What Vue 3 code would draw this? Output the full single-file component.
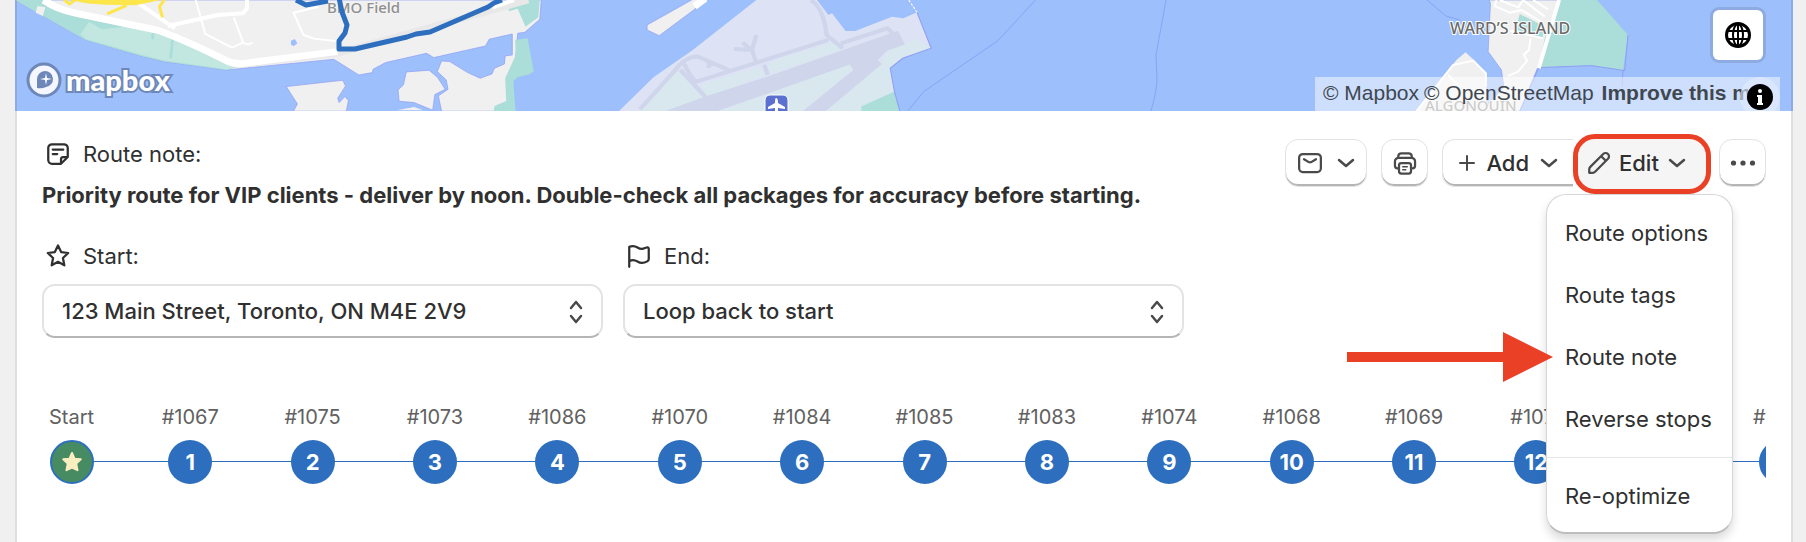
<template>
	<div class="page">
		<main class="card">
			<section class="map" aria-label="Route map">
				<svg class="map-canvas" viewBox="15 0 1778 111" preserveAspectRatio="xMinYMin slice" aria-hidden="true">
					<!-- mainland shore -->
					<g transform="scale(0.357 0.333)">
						<path class="land" d="M42 0 100 35 240 120 400 170 460 185 635 210 935 178 1005 225 1043 218 1045 208 1080 188 1195 160 1215 173 1360 138 1370 118 1435 102 1435 165 1415 168 1413 192 1385 205 1378 222 1345 235 1310 218 1260 185 1237 183 1225 215 1250 240 1255 268 1228 288 1237 334H1420L1445 165 1450 100 1470 97 1512 58 1516 0Z" />
						<path class="land" d="M802 260 960 241 968 258 946 295 950 308 966 290 976 302 970 334H822L833 312Z" />
						<path class="land" d="M1138 216 1202 211 1226 233 1247 268 1218 284 1212 331 1160 308 1118 304 1115 270 1130 255Z" />
						<path class="land flat" d="M1112 331 1160 321 1185 331Z" />
						<path class="park" d="M42 0 130 0 190 30 480 95 670 200 635 210 460 185 400 170 240 120 100 35Z" />
						<path class="park-light" d="M250 65 285 88 350 80 425 97 480 115 560 150 660 202 635 208 460 182 400 165 240 117 225 103Z" />
						<path class="park-line" d="M428 97V118M483 118 478 175" />
						<path class="park" d="M1422 16 1452 0H1512L1508 52 1472 80 1450 26 1426 34Z" />
						<path class="park" d="M1443 120 1478 115 1495 215 1483 223 1450 232 1438 243 1444 334H1383L1385 318 1418 303 1415 235 1445 165Z" />
						<path class="land flat" d="M105 18 127 22 120 48 100 38Z" />
						<path class="water" d="M815 122 826 117 833 130 822 139 815 134Z" />
						<path class="road-edge" d="M122 0Q160 28 215 40L440 90Q520 120 640 185 665 195 700 190L945 160 1480 0" />
						<path class="road" d="M122 0Q160 28 215 40L440 90Q520 120 640 185 665 195 700 188L945 155" />
						<path class="road mid" d="M375 0 490 85M470 78 610 45 680 40 692 25V0M1380 22 1440 0" />
						<path class="road thin" d="M548 0 575 102 650 143 680 128 695 134 708 128M655 52 682 130M892 20 822 38 850 105 880 116 945 124" />
						<path class="highway-fill" d="M205 0Q230 12 300 14L380 16 450 0Z" />
						<path class="highway" d="M180 0 195 12 210 0M300 42 355 16M460 0 447 20 455 52" />
					</g>
					<!-- island airport -->
					<g transform="translate(500 0) scale(0.357 0.333)">
						<path class="land" d="M540 -2 412 75V90L446 107 580 0Z" />
						<path class="road" d="M575 -5 545 19" />
						<path class="airport" d="M718 0 540 150 430 232 333 334H1120L1105 275 1093 205 1128 175 1208 145 1168 37 1130 55 1098 50 995 93H968L930 40 920 45 888 0Z" />
						<path class="airfield" d="M495 215 390 334H475L570 295 510 222ZM565 260 575 250 730 202 742 225 590 286 570 285ZM750 195 765 182 935 128 952 152 760 220ZM985 192 610 334H850L985 215ZM1060 200 910 334H1010L1105 275 1093 205 1128 175 1208 145 1165 120 1090 150Z" />
						<path class="runway-fill" d="M462 334 575 290 750 230 1115 92 1134 134 1085 152 1058 180 1070 192 912 334H848L990 210 980 194 608 334Z" />
						<path class="taxiway" d="M392 328 490 212Q520 168 555 170L640 210M505 210 575 290M515 190Q535 235 550 245L920 120M870 0Q905 20 915 105L960 145M740 195 750 225M955 130 1085 85 1105 105" />
						<path class="taxiway" d="M718 105 706 150 718 190M655 147 710 150M680 127 702 150M585 204V192H600" />
						<path class="park" d="M1012 320 1105 275 1120 334H1012Z" />
						<path class="shore" d="M1168 37 1208 145 1128 175 1093 205 1105 275 1120 334" />
						<path class="dashes" d="M1145 0 1168 37" />
						<path class="ferry" d="M1500 0 1395 122 1187 275 1142 334" />
					</g>
					<path class="ferry" d="M1166 0 1156 55 1157 80Q1157 90 1151 111M1427 0 1446 16 1460 20" />
					<!-- ward's island -->
					<g transform="translate(1300 0) scale(0.333)">
						<path class="land" d="M568 0 572 10 565 155 605 210 612 260 550 334H660L715 200 778 0Z" />
						<path class="land flat" d="M497 157 470 180 430 230 350 334H560V220L520 178Z" />
						<path class="park" d="M778 0H892L985 105 970 212 875 197 717 203 735 115Z" />
						<path class="park" d="M660 42 735 80 728 115 645 95Z" />
						<path class="shore" d="M985 105 975 212 875 197 717 203 660 334M970 212 967 260" />
						<path class="road mid" d="M778 0 717 205" />
						<path class="road thin" d="M590 0 585 18 630 38 665 30 728 68M600 0 655 22 670 0 735 50M700 0 745 28M630 92 730 115M692 115 688 150 672 165 682 182 655 215 625 228M350 334 460 195 520 182 558 220V260M445 225 480 262" />
					</g>
					<rect class="airport-icon" x="765" y="95" width="23" height="22" rx="5" />
					<path class="plane" d="M776 98Q778 98 778 103L785 107V109L778 108V114H775V108L768 109V107L775 103Q775 98 776 98Z" />
					<text class="place" x="327" y="13">BMO Field</text>
					<text class="place island" x="1450" y="34">WARD’S ISLAND</text>
					<text class="place faint" x="1425" y="111">ALGONQUIN</text>
					<path class="route" d="M296 0 306 5 328 1M339 -2 342 12 347 25 345 33 339 41V49H355L407 37 416 34 430 32 488 7 494 3 502 0" />
				</svg>

				<a class="map-logo" href="#" aria-label="Mapbox homepage">
					<svg width="36" height="38" viewBox="0 0 36 38" aria-hidden="true">
						<circle cx="18" cy="19" r="16" fill="#f4f7ff" stroke="#6d87b9" stroke-width="3" />
						<path d="M11 27V18A8 8 0 1 1 20 26Q16 28 11 27Z" fill="#6d87b9" />
						<path d="M20 12 21 17 26 18 21 19 20 24 19 19 14 18 19 17Z" fill="#fff" />
					</svg>
					<span>mapbox</span>
				</a>

				<button class="globe" type="button" aria-label="Change map style">
					<svg width="26" height="26" viewBox="0 0 26 26" fill="none" stroke="#000" stroke-width="2" aria-hidden="true">
						<circle cx="13" cy="13" r="11.500" stroke-width="3" />
						<ellipse cx="13" cy="13" rx="5" ry="11" />
						<path d="M13 2V24M3 9H23M3 17H23" />
					</svg>
				</button>

				<div class="attribution">
					<a href="#">© Mapbox</a>
					<a href="#">© OpenStreetMap</a>
					<a class="improve" href="#">Improve this map</a>
					<button class="info" type="button" aria-label="Toggle attribution">
						<svg width="26" height="26" viewBox="0 0 26 26" aria-hidden="true">
							<circle cx="13" cy="13" r="13" fill="#000" />
							<circle cx="13" cy="7" r="2" fill="#fff" />
							<path d="M10 11H15V19H16V21H10V19H11V13H10Z" fill="#fff" />
						</svg>
					</button>
				</div>
			</section>

			<section class="panel">
				<header class="panel-header">
					<div class="note">
						<h2 class="caption">
							<svg class="icon" viewBox="0 0 20 20" aria-hidden="true">
								<path d="M12 16.500H6A2.500 2.500 0 0 1 3.500 14V6A2.500 2.500 0 0 1 6 3.500H14A2.500 2.500 0 0 1 16.500 6V12L12 16.500V13.500Q12 12 13.500 12H16.500M6.500 7H13.500M6.500 10H9.500" />
							</svg>
							Route note:
						</h2>
						<p class="note-text">{{ note }}</p>
					</div>

					<div class="toolbar">
						<button class="btn" type="button" aria-label="Send">
							<svg class="icon" viewBox="0 0 20 20" aria-hidden="true">
								<rect x="2.750" y="4" width="14.500" height="12" rx="2.500" />
								<path d="M6 7.500 9.200 9.400Q10 9.800 10.800 9.400L14 7.500" />
							</svg>
							<svg class="chevron" viewBox="0 0 18 10" aria-hidden="true"><path d="M2 2 9 8 16 2" /></svg>
						</button>
						<button class="btn square" type="button" aria-label="Print">
							<svg class="icon" viewBox="0 0 20 20" aria-hidden="true">
								<path d="M5.500 6.500V5.500A2 2 0 0 1 7.500 3.500H12.500A2 2 0 0 1 14.500 5.500V6.500M5.500 13.500H5A1.700 1.700 0 0 1 3.300 11.800V9A2.500 2.500 0 0 1 5.800 6.500H14.200A2.500 2.500 0 0 1 16.700 9V11.800A1.700 1.700 0 0 1 15 13.500H14.500" />
								<rect x="6" y="10" width="8" height="7" rx="1.500" />
								<path d="M8.500 12.500H11.500M8.500 14.500H10.500" stroke-width="1" />
							</svg>
						</button>
						<div class="group">
							<button class="btn add" type="button">
								<svg class="plus" viewBox="0 0 16 16" aria-hidden="true"><path d="M8 1V15M1 8H15" /></svg>
								Add
								<svg class="chevron" viewBox="0 0 18 10" aria-hidden="true"><path d="M2 2 9 8 16 2" /></svg>
							</button>
							<div class="edit-wrap">
								<button class="btn edit" type="button" :aria-expanded="menuOpen" @click="menuOpen = !menuOpen">
									<svg class="icon" viewBox="0 0 20 20" aria-hidden="true">
										<path d="M3.500 16.500V14.200Q3.500 13.300 4.200 12.600L12.800 4A2.200 2.200 0 0 1 16 7.200L7.400 15.800Q6.700 16.500 5.800 16.500ZM11.500 5.500 14.500 8.500" />
									</svg>
									Edit
									<svg class="chevron" viewBox="0 0 18 10" aria-hidden="true"><path d="M2 2 9 8 16 2" /></svg>
								</button>
								<ul v-if="menuOpen" class="menu">
									<li v-for="item in menuItems" :key="item.label" :class="{ divided: item.divided }">
										<button type="button">{{ item.label }}</button>
										<svg v-if="item.pointed" class="arrow" width="206" height="50" viewBox="0 0 206 50" aria-hidden="true">
											<path d="M0 20H156V0L206 25 156 50V30H0Z" fill="#ea4126" />
										</svg>
									</li>
								</ul>
							</div>
						</div>
						<button class="btn square" type="button" aria-label="More actions">
							<svg width="26" height="6" viewBox="0 0 26 6" fill="#4a4a4a" aria-hidden="true">
								<circle cx="3.500" cy="3" r="2.600" />
								<circle cx="13" cy="3" r="2.600" />
								<circle cx="22.500" cy="3" r="2.600" />
							</svg>
						</button>
					</div>
				</header>

				<div class="fields">
					<div class="field">
						<label class="caption" for="start">
							<svg class="icon" viewBox="0 0 20 20" aria-hidden="true">
								<path d="M10 3 12.100 7.400 16.800 8 13.300 11.300 14.200 16.200 10 13.900 5.800 16.200 6.700 11.300 3.200 8 7.900 7.400Z" />
							</svg>
							Start:
						</label>
						<div class="select">
							<select id="start" v-model="start">
								<option>123 Main Street, Toronto, ON M4E 2V9</option>
							</select>
							<svg class="updown" viewBox="0 0 14 24" aria-hidden="true"><path d="M2 8 7 2 12 8M2 16 7 22 12 16" /></svg>
						</div>
					</div>
					<div class="field">
						<label class="caption" for="end">
							<svg class="icon" viewBox="0 0 20 20" aria-hidden="true">
								<path d="M3.500 17.200V3.800Q6.500 2.700 9 4.300 11.500 6 14 4.700L15.200 4.300Q16.500 4 16.500 5.500V12Q16.500 13 15.500 13.600 12 15.600 9 13.700 6 12 3.500 13.500" />
							</svg>
							End:
						</label>
						<div class="select">
							<select id="end" v-model="end">
								<option>Loop back to start</option>
							</select>
							<svg class="updown" viewBox="0 0 14 24" aria-hidden="true"><path d="M2 8 7 2 12 8M2 16 7 22 12 16" /></svg>
						</div>
					</div>
				</div>

				<ol class="stops">
					<li class="stop first">
						<span>Start</span>
						<b class="dot home">
							<svg width="22" height="22" viewBox="0 0 22 22" aria-hidden="true">
								<path d="M11 2 13.500 7.700 19.800 8.300 15.200 12.500 16.500 19.200 11 16.600 5.500 19.200 6.800 12.500 2.200 8.300 8.500 7.700Z" fill="#fbeec0" stroke="#fbeec0" stroke-width="2" stroke-linejoin="round" />
							</svg>
						</b>
					</li>
					<li v-for="(id, i) in stops" :key="id" class="stop">
						<span>#{{ id }}</span>
						<b class="dot">{{ i + 1 }}</b>
					</li>
				</ol>
			</section>
		</main>
	</div>
</template>

<script setup>
import { ref } from 'vue'

const note = 'Priority route for VIP clients - deliver by noon. Double-check all packages for accuracy before starting.'
const start = ref('123 Main Street, Toronto, ON M4E 2V9')
const end = ref('Loop back to start')
const menuOpen = ref(true)

const menuItems = [
	{ label: 'Route options' },
	{ label: 'Route tags' },
	{ label: 'Route note', pointed: true },
	{ label: 'Reverse stops' },
	{ label: 'Re-optimize', divided: true }
]

const stops = [1067, 1075, 1073, 1086, 1070, 1084, 1085, 1083, 1074, 1068, 1069, 1071, 1072, 1076]
</script>

<style>
body {
	margin: 0;
	background: #f0f0f0;
}
</style>

<style scoped>
.page {
	box-sizing: border-box;
	min-height: 100vh;
	padding: 0 13px 0 15px;
	display: flex;
	background: #f0f0f0;
	color: #303030;
	font-family: Inter, "Liberation Sans", sans-serif;
	font-size: 22px;
}
.card {
	flex: 1;
	min-width: 0;
	background: #fff;
	box-shadow: inset 2px 0 0 #dedede, inset -2px 0 0 #dedede;
}
button,
select {
	font: inherit;
	color: inherit;
	margin: 0;
	cursor: pointer;
}

/* map */
.map {
	position: relative;
	height: 111px;
	overflow: hidden;
	background: #9dbffb;
}
.map::after {
	content: "";
	position: absolute;
	inset: 0;
	border: solid rgba(0, 0, 0, 0.1);
	border-width: 0 2px;
	pointer-events: none;
}
.map-canvas {
	display: block;
	width: 100%;
	height: 100%;
}
.map-canvas path {
	fill: none;
}
.map-canvas .land {
	fill: #f0f0f0;
	stroke: #8f9df5;
	stroke-width: 2;
}
.map-canvas .flat {
	stroke: none;
}
.map-canvas .water {
	fill: #9dbffb;
}
.map-canvas .park {
	fill: #abded8;
}
.map-canvas .park-light {
	fill: #c2e7e1;
}
.map-canvas .park-line {
	stroke: #abded8;
	stroke-width: 8;
}
.map-canvas .airport {
	fill: #dde3f4;
}
.map-canvas .airfield {
	fill: #d8e8ee;
}
.map-canvas .runway-fill {
	fill: #cfd5eb;
}
.map-canvas .taxiway {
	stroke: #cfd5eb;
	stroke-width: 12;
}
.map-canvas .shore {
	stroke: #8f9df5;
	stroke-width: 3;
}
.map-canvas .dashes {
	stroke: #fff;
	stroke-width: 3;
	stroke-dasharray: 8 4;
}
.map-canvas .ferry {
	stroke: #86a5f6;
	stroke-width: 1;
	vector-effect: non-scaling-stroke;
}
.map-canvas .road-edge {
	stroke: #e8e8e8;
	stroke-width: 7;
	vector-effect: non-scaling-stroke;
}
.map-canvas .road {
	stroke: #fff;
	stroke-width: 7;
	stroke-linejoin: round;
	vector-effect: non-scaling-stroke;
}
.map-canvas .mid {
	stroke-width: 4;
}
.map-canvas .thin {
	stroke-width: 2;
}
.map-canvas .highway-fill {
	fill: #fde64b;
}
.map-canvas .highway {
	stroke: #fde64b;
	stroke-width: 3;
	vector-effect: non-scaling-stroke;
}
.map-canvas .route {
	stroke: #2d6fbe;
	stroke-width: 5;
	stroke-linejoin: round;
}
.airport-icon {
	fill: #5b70d0;
	stroke: #fff;
	stroke-width: 1;
}
.map-canvas .plane {
	fill: #fff;
}
.place {
	font-family: "Noto Sans", sans-serif;
	font-size: 15px;
	font-weight: 500;
	fill: #8f8f8f;
	stroke: #f4f4f4;
	stroke-width: 2;
	paint-order: stroke;
}
.island {
	font-size: 16px;
	fill: #6b6b6b;
	stroke: #fff;
}
.faint {
	fill: #999;
}
.map-logo {
	position: absolute;
	left: 11px;
	bottom: 12px;
	display: flex;
	align-items: center;
	gap: 4px;
	color: #fff;
	text-decoration: none;
	font-family: Lato, sans-serif;
	font-size: 29px;
	font-weight: 900;
	line-height: 38px;
}
.map-logo span {
	-webkit-text-stroke: 4px #6d87b9;
	paint-order: stroke fill;
}
.globe {
	position: absolute;
	top: 10px;
	right: 30px;
	width: 50px;
	height: 50px;
	padding: 0;
	display: grid;
	place-items: center;
	border: 0;
	border-radius: 6px;
	background: #fff;
	box-shadow: 0 0 0 3px rgba(0, 0, 0, 0.1);
}
.attribution {
	position: absolute;
	right: 13px;
	bottom: 0;
	box-sizing: border-box;
	display: flex;
	gap: 5px;
	width: 465px;
	height: 34px;
	padding: 0 32px 0 8px;
	overflow: hidden;
	background: rgba(255, 255, 255, 0.5);
	font-family: "Liberation Sans", Arial, sans-serif;
	font-size: 21px;
	line-height: 32px;
	white-space: nowrap;
}
.attribution a {
	flex: none;
	color: #404750;
	text-decoration: none;
}
.attribution .improve {
	flex: 1;
	min-width: 0;
	margin-left: 3px;
	overflow: hidden;
	font-weight: 700;
}
.info {
	position: absolute;
	right: 0;
	top: 0;
	width: 40px;
	height: 40px;
	padding: 0;
	display: grid;
	place-items: center;
	border: 0;
	border-radius: 20px;
	background: rgba(225, 235, 255, 0.6);
}

/* panel */
.panel {
	padding: 25px 27px 0;
}
.panel-header {
	display: flex;
	justify-content: space-between;
	align-items: flex-start;
}
.caption {
	display: flex;
	align-items: center;
	gap: 10px;
	margin: 0;
	font-size: 22px;
	font-weight: 400;
	line-height: 36px;
}
.note-text {
	margin: 0;
	font-weight: 700;
	line-height: 46px;
}
.icon,
.chevron,
.plus,
.updown {
	flex: none;
	fill: none;
	stroke: #4a4a4a;
	stroke-width: 2;
	stroke-linecap: round;
	stroke-linejoin: round;
}
.icon {
	width: 30px;
	height: 30px;
	stroke-width: 1.5;
}
.caption .icon {
	margin-left: 1px;
	stroke: #303030;
}
.chevron {
	width: 18px;
	height: 10px;
	stroke-width: 2.5;
}
.plus {
	width: 16px;
	height: 16px;
}
.toolbar {
	display: flex;
	align-items: center;
	gap: 14px;
	margin-top: 3px;
}
.group {
	display: flex;
}
.btn {
	display: flex;
	align-items: center;
	gap: 12px;
	height: 48px;
	padding: 0 11px 0 9px;
	border: 1px solid #e3e3e3;
	border-radius: 13px;
	background: #fff;
	box-shadow: inset 0 -2px 0 #b5b5b5;
	font-weight: 500;
}
.btn.square {
	width: 47px;
	padding: 0;
	justify-content: center;
}
.btn.add {
	gap: 11px;
	padding: 0 15px 0 16px;
	border-right: 0;
	border-radius: 13px 0 0 13px;
}
.btn.edit {
	gap: 5px;
	width: 132px;
	padding: 0 0 0 10px;
	border-color: transparent;
	background: transparent;
	box-shadow: none;
}
.btn.edit .chevron {
	margin-left: 4px;
}
.edit-wrap {
	position: relative;
	z-index: 1;
}
.edit-wrap::before {
	content: "";
	position: absolute;
	z-index: -1;
	inset: -5px -6px -7px 0;
	border: 5px solid #ea4126;
	border-radius: 22px;
	background: #f5f5f5;
}
.menu {
	position: absolute;
	top: 55px;
	right: -28px;
	width: 185px;
	margin: 0;
	padding: 7px 0 5px;
	list-style: none;
	border: 1px solid #d6d6d6;
	border-bottom: 2px solid #bdbdbd;
	border-radius: 20px;
	background: #fff;
	box-shadow: 0 6px 10px rgba(0, 0, 0, 0.14);
}
.menu li {
	position: relative;
}
.menu button {
	display: block;
	width: 100%;
	padding: 0 0 0 18px;
	border: 0;
	background: none;
	text-align: left;
	white-space: nowrap;
	line-height: 62px;
}
.menu .divided {
	margin-top: 7px;
	padding-top: 7px;
	border-top: 1px solid #e6e6e6;
}
.arrow {
	position: absolute;
	top: 6px;
	right: calc(100% - 6px);
}

.fields {
	display: flex;
	gap: 20px;
	margin-top: 20px;
}
.field {
	width: 561px;
}
.select {
	position: relative;
	margin-top: 10px;
}
select {
	appearance: none;
	display: block;
	width: 100%;
	height: 54px;
	padding: 0 50px 0 18px;
	border: 2px solid #e3e3e3;
	border-bottom-color: #b5b5b5;
	border-radius: 13px;
	background: #fff;
	font-weight: 500;
}
.updown {
	position: absolute;
	top: 16px;
	right: 20px;
	width: 14px;
	height: 24px;
	stroke-width: 2.5;
	pointer-events: none;
}

.stops {
	position: relative;
	display: flex;
	margin: 63px 0 0;
	padding: 0;
	overflow: hidden;
	list-style: none;
	color: #616161;
	font-size: 20px;
}
.stops::before {
	content: "";
	position: absolute;
	left: 30px;
	right: 0;
	top: 60px;
	height: 1px;
	background: #2d6fbe;
}
.stop {
	position: relative;
	flex: 0 0 7.1%;
	display: flex;
	flex-direction: column;
	align-items: center;
	gap: 7px;
	line-height: 32px;
}
.stop.first {
	flex-basis: 59px;
	padding-right: 28px;
}
.dot {
	box-sizing: border-box;
	width: 44px;
	height: 44px;
	display: grid;
	place-items: center;
	border-radius: 50%;
	background: #2d6fbe;
	color: #fff;
	font-size: 22px;
	font-weight: 700;
}
.dot.home {
	border: 2px solid #2d6fbe;
	background: #478b62;
}
</style>
